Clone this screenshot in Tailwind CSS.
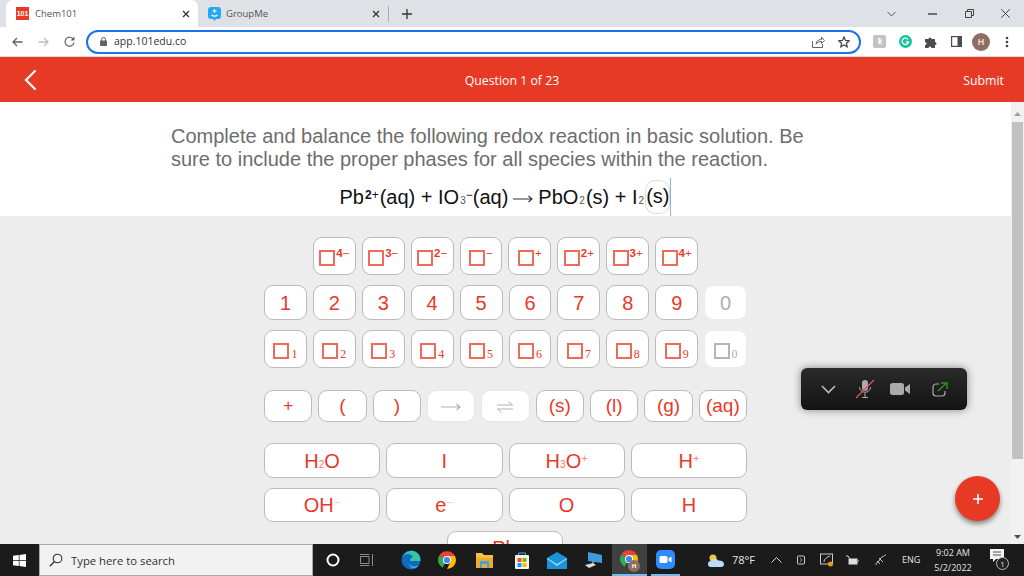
<!doctype html>
<html lang="en">
<head>
<meta charset="utf-8">
<title>Chem101</title>
<script src="https://cdn.jsdelivr.net/npm/@tailwindcss/browser@4"></script>
</head>
<body class="w-[1024px] h-[576px] overflow-hidden flex flex-col bg-white font-['Liberation_Sans',sans-serif]">

<!-- tab strip -->
<div class="h-[27px] flex-none bg-[#dee1e6] flex items-end pl-[6px] font-['Open_Sans',sans-serif] text-[9.5px] text-[#555]">
    <div class="w-[192px] h-[27px] bg-white rounded-t-[7px] flex items-center pl-[10px]">
        <span class="w-[13px] h-[13px] bg-[#e63a25] text-white font-bold text-[7px] leading-[13px] text-center font-['Liberation_Sans',sans-serif]">101</span>
        <span class="ml-[6px] pt-[2px] flex-1">Chem101</span>
        <svg class="mr-[8px]" width="8" height="8" viewBox="0 0 8 8"><path d="M1 1l6 6M7 1l-6 6" stroke="#333" stroke-width="1.3"/></svg>
    </div>
    <div class="w-[191px] h-[27px] flex items-center pl-[10px] relative">
        <svg width="13" height="14" viewBox="0 0 13 14"><path d="M3 0h7a3 3 0 0 1 3 3v6a3 3 0 0 1-3 3H8l-1.500 2L5 12H3a3 3 0 0 1-3-3V3a3 3 0 0 1 3-3z" fill="#23a9f2"/><path d="M6.500 2v4M4.500 4h4M3.500 8c1.500 1.500 4.500 1.500 6 0" stroke="#fff" stroke-width="1.200" fill="none"/></svg>
        <span class="ml-[5px] pt-[2px] flex-1">GroupMe</span>
        <svg class="mr-[9px]" width="8" height="8" viewBox="0 0 8 8"><path d="M1 1l6 6M7 1l-6 6" stroke="#333" stroke-width="1.3"/></svg>
        <span class="absolute right-0 top-[6px] w-[1px] h-[16px] bg-[#a9acb0]"></span>
    </div>
    <svg class="ml-[13px] mb-[8px]" width="10" height="10" viewBox="0 0 10 10"><path d="M5 0v10M0 5h10" stroke="#333" stroke-width="1.300"/></svg>
    <div class="ml-auto h-[27px] flex items-center">
        <svg class="mr-[32px]" width="9" height="6" viewBox="0 0 9 6"><path d="M.5 1l4 4 4-4" stroke="#555" fill="none"/></svg>
        <svg class="mr-[28px]" width="9" height="2" viewBox="0 0 9 2"><path d="M0 1h9" stroke="#222" stroke-width="1.200"/></svg>
        <svg class="mr-[27px]" width="9" height="9" viewBox="0 0 9 9"><path d="M.5 2.500h6v6h-6zM2.500 2.500v-2h6v6h-2" stroke="#333" fill="none" stroke-width=".9"/></svg>
        <svg class="mr-[14px]" width="9" height="9" viewBox="0 0 9 9"><path d="M.3.300l8.400 8.400M8.700.300L.3 8.700" stroke="#333" stroke-width=".9"/></svg>
    </div>
</div>

<!-- toolbar -->
<div class="h-[30px] flex-none bg-white border-b border-[#d6d8dc] flex items-center">
    <svg class="ml-[12px]" width="11" height="10" viewBox="0 0 11 10"><path d="M10.500 5H1M5 1L1 5l4 4" stroke="#5f6368" stroke-width="1.300" fill="none"/></svg>
    <svg class="ml-[15px]" width="11" height="10" viewBox="0 0 11 10"><path d="M.5 5H10M6 1l4 4-4 4" stroke="#b9bcc0" stroke-width="1.300" fill="none"/></svg>
    <svg class="ml-[15px]" width="11" height="11" viewBox="0 0 11 11"><path d="M9.500 3.500A4.500 4.500 0 1 0 10 6.500" stroke="#5f6368" stroke-width="1.200" fill="none"/><path d="M10.500 0.500v4h-4z" fill="#5f6368"/></svg>
    <div class="ml-[11px] w-[775px] h-[24px] border-2 border-[#1a73e8] rounded-full flex items-center pl-[12px] pr-[8px]">
        <svg width="7" height="9" viewBox="0 0 7 9"><path d="M1.500 4V2.500a2 2 0 0 1 4 0V4" stroke="#5f6368" fill="none"/><rect y="3.500" width="7" height="5.500" rx=".7" fill="#5f6368"/></svg>
        <span class="ml-[7px] flex-1 text-[10.500px] text-[#333] font-['Open_Sans',sans-serif]">app.101edu.co</span>
        <svg width="13" height="12" viewBox="0 0 13 12"><path d="M.5 5v6.500h10V8M4 8c.5-3 2.500-4.500 5.500-4.500V1L12.500 4.500 9.500 7.500V5.500C7 5.500 5.500 6.500 4 8z" stroke="#5f6368" fill="none"/></svg>
        <svg class="ml-[13px] mr-[1px]" width="12" height="12" viewBox="0 0 12 12"><path d="M6 1l1.500 3.400 3.700.4-2.800 2.400.8 3.600L6 9l-3.200 1.800.8-3.600L.8 4.800l3.700-.4z" stroke="#444" stroke-width="1.200" fill="none"/></svg>
    </div>
    <span class="ml-[12px] w-[13px] h-[13px] rounded-[2px] bg-[#c2c2c2] text-white text-[8px] leading-[13px] text-center font-bold">ꝁ</span>
    <svg class="ml-[13px]" width="13" height="13" viewBox="0 0 13 13"><circle cx="6.500" cy="6.500" r="6.500" fill="#15c39a"/><path d="M9 4.500A3.200 3.200 0 1 0 9.500 7H7" stroke="#fff" stroke-width="1.300" fill="none"/></svg>
    <svg class="ml-[13px]" width="12" height="12" viewBox="0 0 12 12"><path d="M0 3h3.500a1.500 1.500 0 0 1 3 0H10v3a1.500 1.500 0 0 1 0 3v3H6.500a1.500 1.500 0 0 0-3 0H0V9a1.500 1.500 0 0 0 0-3z" fill="#4a4d51"/></svg>
    <svg class="ml-[14px]" width="11" height="11" viewBox="0 0 11 11"><rect x=".6" y=".6" width="9.800" height="9.800" fill="none" stroke="#4a4d51" stroke-width="1.200"/><rect x="6.500" y="1" width="4" height="9" fill="#4a4d51"/></svg>
    <span class="ml-[10px] w-[18px] h-[18px] rounded-full bg-[#8d6e63] text-[#e8dcd8] text-[9px] font-bold leading-[18px] text-center">H</span>
    <svg class="ml-[15px]" width="4" height="12" viewBox="0 0 4 12"><circle cx="2" cy="2" r="1.300" fill="#444"/><circle cx="2" cy="6" r="1.300" fill="#444"/><circle cx="2" cy="10" r="1.300" fill="#444"/></svg>
</div>

<!-- red question bar -->
<div class="h-[45px] flex-none bg-[#e63a25] grid grid-cols-3 items-center text-white text-[12.300px] font-['Open_Sans',sans-serif]">
    <div class="pl-[24px]"><svg width="13" height="22" viewBox="0 0 13 22"><path d="M11.500 1.500L2 11l9.500 9.500" stroke="#fff" stroke-width="2.200" fill="none"/></svg></div>
    <div class="text-center pt-[3px]">Question 1 of 23</div>
    <div class="text-right pr-[20px] pt-[3px]">Submit</div>
</div>

<div class="flex-1 min-h-0 flex">
    <div class="flex-1 min-w-0 flex flex-col">
        <!-- question -->
        <div class="h-[114px] flex-none pt-[23px]">
            <p class="pl-[171px] text-[20px] leading-[23px] text-[#6d6d6d]">Complete and balance the following redox reaction in basic solution. Be<br>sure to include the proper phases for all species within the reaction.</p>
            <div class="h-[38px] mt-[7px] flex justify-center items-center text-[20px] text-[#111]">
                <span>Pb<span class="text-[12px] relative top-[-5px] ml-[1px]"><b>2</b>+</span><span class="ml-[1px]">(aq)</span> + IO<span class="text-[10px] ml-[1px] text-[#555]">3</span><span class="text-[12px] relative top-[-5px]">−</span>(aq)</span>
                <svg class="mx-[5px] mt-[3px]" width="20" height="8" viewBox="0 0 20 8"><path d="M0 4h19M15.500 1l3.500 3-3.500 3" stroke="#333" stroke-width="1.100" fill="none"/></svg>
                <span>PbO<span class="text-[10px] mx-[1px] text-[#555]">2</span>(s) + I<span class="text-[10px] mx-[1px] text-[#555]">2</span></span>
                <span class="h-[32px] leading-[31px] ml-[1px] ring-1 ring-[#ddd] rounded-[9px]">(s)</span>
                <span class="w-[1px] h-[38px] ml-[1px] bg-[#8fb4d8]"></span>
            </div>
        </div>
        <!-- keyboard -->
        <div class="flex-1 min-h-0 overflow-hidden bg-[#ededed] pt-[21px] flex flex-col items-center">
            <div class="w-[483px]">
                <div id="charges" class="h-[38px] flex gap-[6px] pl-[48.900px]"></div>
                <div id="digits" class="h-[35px] mt-[10px] flex gap-[6px]"></div>
                <div id="subs" class="h-[38px] mt-[10px] flex gap-[6px]"></div>
                <div class="h-[32px] mt-[22px] grid grid-cols-9 gap-[6px] text-[#e8392a] text-[19px]">
                    <button class="bg-white border border-[#bbb] rounded-[9px] text-[17px]">+</button>
                    <button class="bg-white border border-[#bbb] rounded-[9px]">(</button>
                    <button class="bg-white border border-[#bbb] rounded-[9px]">)</button>
                    <button class="bg-white border border-[#e6e6e6] rounded-[9px] flex items-center justify-center"><svg class="mt-[2px]" width="20" height="8" viewBox="0 0 20 8"><path d="M0 4h19M15.500 1l3.500 3-3.500 3" stroke="#adb1b3" stroke-width="1.100" fill="none"/></svg></button>
                    <button class="bg-white border border-[#e6e6e6] rounded-[9px] flex items-center justify-center"><svg class="mt-[2px]" width="16" height="12" viewBox="0 0 16 12"><path d="M0 4h15.500L11.500.5M16 8H.5L4.500 11.500" stroke="#adb1b3" fill="none"/></svg></button>
                    <button class="bg-white border border-[#bbb] rounded-[9px]">(s)</button>
                    <button class="bg-white border border-[#bbb] rounded-[9px]">(l)</button>
                    <button class="bg-white border border-[#bbb] rounded-[9px]">(g)</button>
                    <button class="bg-white border border-[#bbb] rounded-[9px]">(aq)</button>
                </div>
                <div class="h-[35px] mt-[21px] grid grid-cols-4 gap-[6px] text-[#e8392a] text-[20px]">
                    <button class="bg-white border border-[#bbb] rounded-[9px]">H<span class="text-[10px] text-[#ee7a6c]">2</span>O</button>
                    <button class="bg-white border border-[#bbb] rounded-[9px]">I</button>
                    <button class="bg-white border border-[#bbb] rounded-[9px]">H<span class="text-[10px] text-[#ee7a6c]">3</span>O<span class="text-[11px] relative top-[-6px] text-[#f08a7e]">+</span></button>
                    <button class="bg-white border border-[#bbb] rounded-[9px]">H<span class="text-[11px] relative top-[-6px] text-[#f08a7e]">+</span></button>
                </div>
                <div class="h-[34px] mt-[10px] grid grid-cols-4 gap-[6px] text-[#e8392a] text-[20px]">
                    <button class="bg-white border border-[#bbb] rounded-[9px]">OH<span class="text-[7px] relative top-[-8px] text-[#f5b3ab]">—</span></button>
                    <button class="bg-white border border-[#bbb] rounded-[9px]">e<span class="text-[7px] relative top-[-8px] text-[#f5b3ab]">—</span></button>
                    <button class="bg-white border border-[#bbb] rounded-[9px]">O</button>
                    <button class="bg-white border border-[#bbb] rounded-[9px]">H</button>
                </div>
                <div class="h-[34px] mt-[9px] flex justify-center text-[#e8392a] text-[20px]">
                    <button class="w-[116px] -translate-x-[1px] bg-white border border-[#bbb] rounded-[9px]">Pb</button>
                </div>
            </div>
        </div>
    </div>
    <!-- scrollbar -->
    <div class="w-[13px] flex-none bg-[#f1f1f1] flex flex-col items-center pt-[10px] pb-[5px]">
        <svg width="7" height="4" viewBox="0 0 7 4"><path d="M3.500 0L7 4H0z" fill="#a3a3a3"/></svg>
        <div class="w-[11px] h-[337px] mt-[6px] bg-[#c1c1c1]"></div>
        <svg class="mt-auto" width="7" height="4" viewBox="0 0 7 4"><path d="M0 0h7L3.500 4z" fill="#505050"/></svg>
    </div>
</div>

<!-- taskbar -->
<div class="h-[32px] flex-none bg-[#1b1b1b] flex items-center text-[#e4e4e4] font-['Open_Sans',sans-serif]">
    <svg class="ml-[13px] flex-none" width="13" height="13" viewBox="0 0 13 13"><path d="M0 1.800L5.800 1v5.200H0zM6.500.9L13 0v6.200H6.500zM0 6.900h5.800V12L0 11.200zM6.500 6.900H13V13l-6.500-.9z" fill="#fff"/></svg>
    <div class="ml-[13px] w-[274px] h-[32px] flex-none bg-[#f2f2f2] border border-[#a8a8a8] flex items-center pl-[9px] text-[11.300px] text-[#333]">
        <svg width="14" height="14" viewBox="0 0 14 14"><circle cx="8.500" cy="5.500" r="4.300" stroke="#333" fill="none" stroke-width="1.100"/><path d="M5.500 8.500L.8 13.200" stroke="#333" stroke-width="1.300"/></svg>
        <span class="ml-[8px] pt-[2px]">Type here to search</span>
    </div>
    <svg class="ml-[13px] flex-none" width="14" height="14" viewBox="0 0 14 14"><circle cx="7" cy="7" r="5.500" stroke="#fff" stroke-width="2" fill="none"/></svg>
    <svg class="ml-[20px] flex-none" width="14" height="12" viewBox="0 0 14 12"><path d="M.5 2.500h8.500v7H.5zM0 .5h9.500M0 11.500h9.500M12.500 0v12" stroke="#bdbdbd" stroke-width=".7" fill="none"/></svg>
    <svg class="ml-[27px] flex-none" width="20" height="20" viewBox="0 0 20 20"><circle cx="10" cy="10" r="9.500" fill="#0c6bbd"/><path d="M1 8C3 2 10-1 15 2c3 2 5 5 4.500 9H9c0-3 2-4 3-4C10 3 3 3 1 8z" fill="#35c6a5"/><path d="M7 11c0 5 6 7 11 4-3 5-10 5-11-4z" fill="#38a8e8"/></svg>
    <svg class="ml-[17px] flex-none" width="18" height="18" viewBox="0 0 18 18"><path d="M9 9L1.300 4.500A9 9 0 0 1 17 5H9z" fill="#ea4335"/><path d="M9 9l-4.500 7.800A9 9 0 0 1 1.300 4.500z" fill="#34a853"/><path d="M9 5h8a9 9 0 0 1-8 13l4-8z" fill="#fbbc05"/><circle cx="9" cy="9" r="4" fill="#fff"/><circle cx="9" cy="9" r="3.100" fill="#4285f4"/></svg>
    <svg class="ml-[20px] flex-none" width="17" height="16" viewBox="0 0 17 16"><path d="M0 1h6l2 2h9v13H0z" fill="#f5c33b"/><rect y="6" width="17" height="10" fill="#f0a92e"/><rect x="4" y="9" width="9" height="7" fill="#3ba4e3"/><rect x="6" y="12" width="5" height="4" fill="#f0a92e"/></svg>
    <svg class="ml-[22px] flex-none" width="14" height="17" viewBox="0 0 14 17"><rect y="3" width="14" height="14" rx="1" fill="#f3f3f3"/><path d="M3.500 3V1h7v2" stroke="#36b6f0" fill="none"/><rect x="2.500" y="6" width="4" height="4" fill="#f25022"/><rect x="7.500" y="6" width="4" height="4" fill="#7fba00"/><rect x="2.500" y="11" width="4" height="4" fill="#00a4ef"/><rect x="7.500" y="11" width="4" height="4" fill="#ffb900"/></svg>
    <svg class="ml-[18px] flex-none" width="20" height="17" viewBox="0 0 20 17"><path d="M0 6L10 0l10 6v11H0z" fill="#1a93d9"/><path d="M0 6l10 6 10-6v1L10 14 0 7z" fill="#9bd9f7"/></svg>
    <svg class="ml-[18px] flex-none" width="17" height="17" viewBox="0 0 17 17"><path d="M3 0l14 3v8L3 9z" fill="#3d9be0"/><path d="M0 13l8-2 3 2-7 3z" fill="#d9d9d9"/><path d="M8 9v3" stroke="#ccc"/></svg>
    <div class="ml-[10px] w-[35px] h-[32px] flex-none bg-[#404040] border-b-2 border-[#76b9ed] flex items-center pl-[8px] relative">
        <svg width="18" height="18" viewBox="0 0 18 18"><path d="M9 9L1.300 4.500A9 9 0 0 1 17 5H9z" fill="#ea4335"/><path d="M9 9l-4.500 7.800A9 9 0 0 1 1.300 4.500z" fill="#34a853"/><path d="M9 5h8a9 9 0 0 1-8 13l4-8z" fill="#fbbc05"/><circle cx="9" cy="9" r="4" fill="#fff"/><circle cx="9" cy="9" r="3.100" fill="#4285f4"/></svg>
        <span class="absolute left-[16px] top-[16px] w-[12px] h-[12px] rounded-full bg-[#8d6e63] text-white text-[6px] font-bold leading-[12px] text-center">H</span>
    </div>
    <div class="ml-[4px] w-[29px] h-[32px] flex-none border-b-2 border-[#76b9ed] flex items-center justify-center">
        <svg width="19" height="19" viewBox="0 0 19 19"><rect width="19" height="19" rx="5" fill="#2d8cff"/><rect x="3.500" y="6" width="8" height="7" rx="1.500" fill="#fff"/><path d="M12.500 8.500L15.500 6.500v6l-3-2z" fill="#fff"/></svg>
    </div>
    <svg class="ml-[28px] flex-none" width="16" height="13" viewBox="0 0 16 13"><circle cx="5" cy="4" r="3.500" fill="#f5c542"/><path d="M3 13a3 3 0 0 1 0-6c1-3 6-3 7-.5 3-.5 6 1 6 3.500a3 3 0 0 1-3 3z" fill="#bcdcf5"/></svg>
    <span class="ml-[8px] w-[21px] flex-none text-[11px]">78°F</span>
    <svg class="ml-[18px] flex-none" width="11" height="6" viewBox="0 0 11 6"><path d="M.5 5.500l5-5 5 5" stroke="#d8d8d8" fill="none"/></svg>
    <svg class="ml-[15px] flex-none" width="8" height="10" viewBox="0 0 8 10"><rect x=".5" y="1" width="7" height="8" rx="1" stroke="#ccc" fill="none"/><path d="M3 3l2 2-2 2" stroke="#ccc" fill="none" stroke-width=".7"/></svg>
    <svg class="ml-[15px] flex-none" width="14" height="14" viewBox="0 0 14 14"><rect x=".5" y="1" width="12" height="10" stroke="#ccc" fill="none"/><path d="M4 9c0-3 3-5 6-6" stroke="#ccc" fill="none"/><circle cx="10.500" cy="11" r="2.500" fill="#f39a1e"/></svg>
    <svg class="ml-[12px] flex-none" width="13" height="11" viewBox="0 0 13 11"><rect x="2.500" y="3.500" width="9" height="6" fill="#ddd"/><path d="M0 1h2l2 3M12 6h1" stroke="#ddd"/></svg>
    <svg class="ml-[16px] flex-none" width="12" height="12" viewBox="0 0 12 12"><path d="M1 11c0-3 2-3 3-4s1-3 3-4 3-2 4-2M4 4l4 4M2 7l3 3" stroke="#c8c8c8" fill="none"/></svg>
    <span class="ml-[15px] w-[19px] flex-none text-[9px]">ENG</span>
    <div class="ml-[13px] w-[38px] flex-none text-center text-[9px] leading-[15px]">9:02 AM<br>5/2/2022</div>
    <div class="ml-[18px] relative w-[20px] h-[22px] flex-none">
        <svg width="14" height="13" viewBox="0 0 14 13"><path d="M0 0h14v10H6l-3 3v-3H0z" fill="#f2f2f2"/><path d="M3 3h8M3 6h8" stroke="#555"/></svg>
        <span class="absolute left-[6px] top-[8px] w-[13px] h-[13px] rounded-full bg-[#222] border border-[#bbb] text-[8px] leading-[11px] text-center">1</span>
    </div>
</div>

<!-- zoom meeting controls -->
<div class="absolute left-[801px] top-[368px] w-[166px] h-[42px] rounded-[6px] bg-gradient-to-b from-[#2b2b2b] to-[#131313] shadow-[0_0_8px_rgba(0,0,0,.45)] flex items-center pl-[20px]">
    <svg width="15" height="9" viewBox="0 0 15 9"><path d="M1 1l6.500 6.500L14 1" stroke="#bdbdbd" stroke-width="1.600" fill="none"/></svg>
    <svg class="ml-[19px]" width="20" height="20" viewBox="0 0 20 20"><rect x="7" y="1" width="6" height="11" rx="3" fill="#aaa"/><path d="M4.500 8c0 7 11 7 11 0M10 14v4M7 18.500h6" stroke="#aaa" fill="none"/><path d="M1 19L19 1" stroke="#e8505f" stroke-width="1.200"/></svg>
    <svg class="ml-[15px]" width="20" height="12" viewBox="0 0 20 12"><rect width="14" height="12" rx="2.500" fill="#aaa"/><path d="M15 4.500L20 1v10l-5-3.500z" fill="#aaa"/></svg>
    <svg class="ml-[22px]" width="16" height="15" viewBox="0 0 16 15"><path d="M7 2H4a3 3 0 0 0-3 3v6a3 3 0 0 0 3 3h6a3 3 0 0 0 3-3V9" stroke="#aaa" stroke-width="1.200" fill="none"/><path d="M6 9L14 1.500M9 1h6v6" stroke="#2f8f1f" stroke-width="1.500" fill="none"/></svg>
</div>

<!-- add button -->
<div class="absolute left-[955px] top-[476px] w-[45px] h-[45px] rounded-full bg-[#e63a25] shadow-[0_3px_5px_rgba(0,0,0,.45)] flex items-center justify-center">
    <svg width="10" height="10" viewBox="0 0 10 10"><path d="M5 0v10M0 5h10" stroke="#fff" stroke-width="1.600"/></svg>
</div>

<script>
    let box = '<span class="inline-block flex-none w-[16px] h-[16px] border-2 border-[#ee6a5a]"></span>';
    let boxOff = '<span class="inline-block flex-none w-[16px] h-[16px] border-2 border-[#b5b5b5]"></span>';
    let key = 'flex-1 bg-white border border-[#bbb] rounded-[9px] flex items-center justify-center pt-[3px] text-[#e8392a]';
    let keyOff = 'flex-1 bg-white border border-[#ececec] rounded-[9px] flex items-center justify-center pt-[3px] text-[#adadad]';
    let subDigit = "ml-[2px] mt-[6px] text-[12px] leading-none font-['Liberation_Serif',serif]";
    let charges = [["4", "−"], ["3", "−"], ["2", "−"], ["", "−"], ["", "+"], ["2", "+"], ["3", "+"], ["4", "+"]];
    let insertHTML = "";

    charges.forEach(function(element)
    {
        insertHTML += '<button class="' + key + ' max-w-[42.900px]">' + box + '<span class="ml-[1px] mb-[8px] text-[11.500px] leading-none"><b>' + element[0] + '</b>' + element[1] + '</span></button>';
    });
    document.getElementById('charges').innerHTML = insertHTML;

    insertHTML = "";
    for (let i = 1; i <= 10; i++)
    {
        insertHTML += '<button class="' + (i == 10 ? keyOff : key) + ' !pt-0 text-[20px]">' + (i % 10) + '</button>';
    }
    document.getElementById('digits').innerHTML = insertHTML;

    insertHTML = "";
    for (let i = 1; i <= 10; i++)
    {
        insertHTML += '<button class="' + (i == 10 ? keyOff : key) + '">' + (i == 10 ? boxOff : box) + '<span class="' + subDigit + '">' + (i % 10) + '</span></button>';
    }
    document.getElementById('subs').innerHTML = insertHTML;
</script>
</body>
</html>
